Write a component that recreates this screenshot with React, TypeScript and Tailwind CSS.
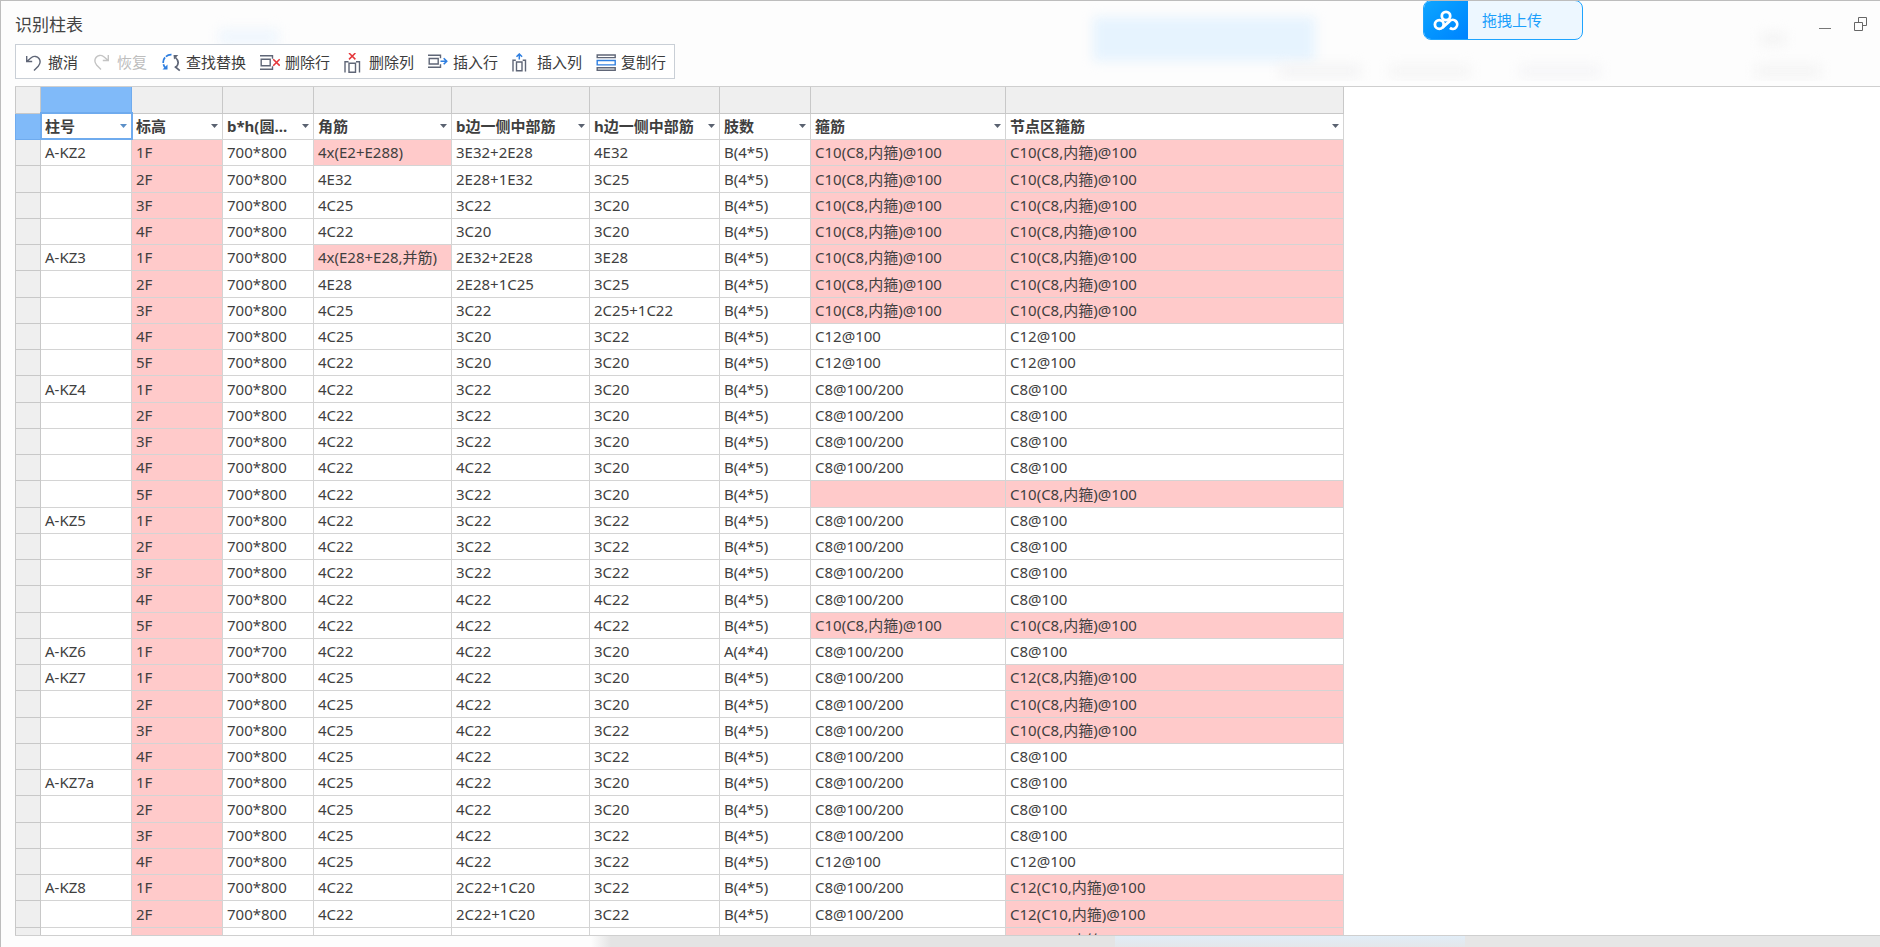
import { ReactNode } from "react";

const PINK = "bg-[#ffcaca]";
const stroke = "#5f6677";

// key, width, label
const COLS: [string, string, string][] = [
  ["no", "w-[91px]", "柱号"],
  ["level", "w-[91px]", "标高"],
  ["size", "w-[91px]", "b*h(圆..."],
  ["corner", "w-[138px]", "角筋"],
  ["b", "w-[138px]", "b边一侧中部筋"],
  ["h", "w-[130px]", "h边一侧中部筋"],
  ["legs", "w-[91px]", "肢数"],
  ["stirrup", "w-[195px]", "箍筋"],
  ["node", "w-[338px]", "节点区箍筋"],
];

const N8 = "C10(C8,内箍)@100";
const N12 = "C12(C8,内箍)@100";
const N1210 = "C12(C10,内箍)@100";
const S = "C8@100/200";

const ROWS: string[][] = [
  ["A-KZ2", "1F", "700*800", "4x(E2+E288)", "3E32+2E28", "4E32", "B(4*5)", N8, N8],
  ["", "2F", "700*800", "4E32", "2E28+1E32", "3C25", "B(4*5)", N8, N8],
  ["", "3F", "700*800", "4C25", "3C22", "3C20", "B(4*5)", N8, N8],
  ["", "4F", "700*800", "4C22", "3C20", "3C20", "B(4*5)", N8, N8],
  ["A-KZ3", "1F", "700*800", "4x(E28+E28,并筋)", "2E32+2E28", "3E28", "B(4*5)", N8, N8],
  ["", "2F", "700*800", "4E28", "2E28+1C25", "3C25", "B(4*5)", N8, N8],
  ["", "3F", "700*800", "4C25", "3C22", "2C25+1C22", "B(4*5)", N8, N8],
  ["", "4F", "700*800", "4C25", "3C20", "3C22", "B(4*5)", "C12@100", "C12@100"],
  ["", "5F", "700*800", "4C22", "3C20", "3C20", "B(4*5)", "C12@100", "C12@100"],
  ["A-KZ4", "1F", "700*800", "4C22", "3C22", "3C20", "B(4*5)", S, "C8@100"],
  ["", "2F", "700*800", "4C22", "3C22", "3C20", "B(4*5)", S, "C8@100"],
  ["", "3F", "700*800", "4C22", "3C22", "3C20", "B(4*5)", S, "C8@100"],
  ["", "4F", "700*800", "4C22", "4C22", "3C20", "B(4*5)", S, "C8@100"],
  ["", "5F", "700*800", "4C22", "3C22", "3C20", "B(4*5)", "", N8],
  ["A-KZ5", "1F", "700*800", "4C22", "3C22", "3C22", "B(4*5)", S, "C8@100"],
  ["", "2F", "700*800", "4C22", "3C22", "3C22", "B(4*5)", S, "C8@100"],
  ["", "3F", "700*800", "4C22", "3C22", "3C22", "B(4*5)", S, "C8@100"],
  ["", "4F", "700*800", "4C22", "4C22", "4C22", "B(4*5)", S, "C8@100"],
  ["", "5F", "700*800", "4C22", "4C22", "4C22", "B(4*5)", N8, N8],
  ["A-KZ6", "1F", "700*700", "4C22", "4C22", "3C20", "A(4*4)", S, "C8@100"],
  ["A-KZ7", "1F", "700*800", "4C25", "4C22", "3C20", "B(4*5)", S, N12],
  ["", "2F", "700*800", "4C25", "4C22", "3C20", "B(4*5)", S, N8],
  ["", "3F", "700*800", "4C25", "4C22", "3C22", "B(4*5)", S, N8],
  ["", "4F", "700*800", "4C25", "4C22", "3C22", "B(4*5)", S, "C8@100"],
  ["A-KZ7a", "1F", "700*800", "4C25", "4C22", "3C20", "B(4*5)", S, "C8@100"],
  ["", "2F", "700*800", "4C25", "4C22", "3C20", "B(4*5)", S, "C8@100"],
  ["", "3F", "700*800", "4C25", "4C22", "3C22", "B(4*5)", S, "C8@100"],
  ["", "4F", "700*800", "4C25", "4C22", "3C22", "B(4*5)", "C12@100", "C12@100"],
  ["A-KZ8", "1F", "700*800", "4C22", "2C22+1C20", "3C22", "B(4*5)", S, N1210],
  ["", "2F", "700*800", "4C22", "2C22+1C20", "3C22", "B(4*5)", S, N1210],
  ["", "3F", "700*800", "4C22", "2C22+1C20", "3C22", "B(4*5)", S, N1210],
];

function isInvalid(col: number, value: string) {
  if (col === 1) return true;
  if (col === 3) return value.includes("(");
  if (col >= 7) return value === "" || value.includes("(");
  return false;
}

function Icon({ children }: { children: ReactNode }) {
  return (
    <svg width="20" height="20" viewBox="0 0 20 20" fill="none" stroke={stroke} strokeWidth="1.4" aria-hidden="true">
      {children}
    </svg>
  );
}

const undoIcon = (
  <Icon>
    <path d="M3.700 3v5.500h5.500M4 8.200L8.500 4.500c2.500-1.800 5.800-1.300 7.500 1 1.900 2.600 1.300 5.200-.8 7.700L11 17.500" />
  </Icon>
);
const redoIcon = (
  <Icon>
    <path stroke="#c4c4c4" d="M16.300 2v5.500h-5.500M16 7.200L11.500 3.500C9 1.700 5.700 2.200 4 4.500c-1.900 2.600-1.300 5.200.8 7.700L9 16.500" />
  </Icon>
);
const replaceIcon = (
  <Icon>
    <path stroke="#2f7fe0" strokeWidth="1.700" strokeDasharray="6 1.200" d="M10.500 1.700C6 1.500 2.300 4.800 2.200 9c0 2.600.8 4.600 2.600 6.200" />
    <path fill="#2f7fe0" stroke="none" d="M1.500 16.500h5v-5z" />
    <path strokeWidth="1.700" d="M14.500 4.500c3 2.800 3.300 6.500.8 9.500M13.800 13.500l5 4.200" />
    <path fill={stroke} stroke="none" d="M12.500 2h4.800l-4.300 4.500z" />
  </Icon>
);
const deleteRowIcon = (
  <Icon>
    <path d="M0 2.700h12.500v3M0 16.300h12.500v-3M1.200 6.200h9v6.500h-9z" />
    <path stroke="#e5383b" strokeWidth="1.600" d="M13.200 6.200l6.500 6.500M19.700 6.200l-6.500 6.500" />
  </Icon>
);
const deleteColIcon = (
  <Icon>
    <path d="M1 19.500V8.700h3.500M15.500 19.500V8.700H12M5 10.200h6.500v9H5z" />
    <path stroke="#e5383b" strokeWidth="1.500" d="M5 0l6.400 6.400M11.400 0L5 6.400" />
  </Icon>
);
const insertRowIcon = (
  <Icon>
    <path d="M0 2.200h12.500v3M0 14.300h12.500v-3M1.200 5.500h9v5.500h-9z" />
    <path stroke="#2f7fe0" strokeWidth="1.600" d="M12.500 8.200h6M15.700 5.200l3 3-3 3" />
  </Icon>
);
const insertColIcon = (
  <Icon>
    <path d="M1 18.500V7.200h2.800M13.500 18.500V7.200h-2.800M4.500 9h5.500v8.700H4.500z" />
    <path stroke="#2f7fe0" strokeWidth="1.500" d="M7.300 6.500V1M4.500 3.800l2.800-2.800 2.800 2.800" />
  </Icon>
);
const copyRowIcon = (
  <Icon>
    <path d="M1.200 2h18v2.600h-18zM1.200 14.800h18v2.400h-18z" />
    <path stroke="#2f7fe0" d="M1.200 7.500h18v4.400h-18z" />
  </Icon>
);

const TOOLS: { label: string; icon: ReactNode; disabled?: boolean }[] = [
  { label: "撤消", icon: undoIcon },
  { label: "恢复", icon: redoIcon, disabled: true },
  { label: "查找替换", icon: replaceIcon },
  { label: "删除行", icon: deleteRowIcon },
  { label: "删除列", icon: deleteColIcon },
  { label: "插入行", icon: insertRowIcon },
  { label: "插入列", icon: insertColIcon },
  { label: "复制行", icon: copyRowIcon },
];

// soft tints of the window lying under the translucent title area
function Backdrop() {
  return (
    <div aria-hidden="true" className="pointer-events-none absolute inset-x-0 top-0 h-20 overflow-hidden">
      <div className="absolute top-4 right-[565px] h-11 w-[222px] bg-[#e6f3fe] blur-[6px]" />
      <div className="absolute top-7 left-[218px] h-4 w-[60px] bg-[#eff6fd] blur-[6px]" />
      <div className="absolute top-16 right-[520px] h-3 w-20 bg-[#f3f3f4] blur-[6px]" />
      <div className="absolute top-16 right-[410px] h-3 w-20 bg-[#f5f5f5] blur-[6px]" />
      <div className="absolute top-16 right-[280px] h-3 w-20 bg-[#f5f5f7] blur-[6px]" />
      <div className="absolute top-8 right-[95px] h-3 w-6 bg-[#f3f3f3] blur-[6px]" />
      <div className="absolute top-16 right-[60px] h-3 w-16 bg-[#f4f4f4] blur-[6px]" />
    </div>
  );
}

function UploadBadge() {
  return (
    <button className="absolute -top-px right-[297px] flex h-10 w-40 overflow-hidden rounded-lg border border-[#1ea4ff] bg-[#edf7ff] text-[15px] text-[#1c9ffb]">
      <span className="flex h-full w-11 items-center justify-center bg-linear-to-br from-[#10a5ff] to-[#0083ff]">
        <svg width="26" height="21" viewBox="0 0 26 21" fill="none" stroke="#fff" strokeWidth="2.800" aria-hidden="true">
          <circle cx="13" cy="6" r="4.200" />
          <circle cx="6.300" cy="14.500" r="4.400" />
          <path d="M9.400 17.600l7.200-6.500a4.500 4.500 0 1 1 .3 6.800" />
        </svg>
      </span>
      <span className="flex h-full items-center pl-3.5">拖拽上传</span>
    </button>
  );
}

function TitleBar() {
  return (
    <header className="relative flex h-[43px] items-center justify-between pt-0.5 pl-3.5 pr-3">
      <h1 className="pt-0.5 text-[17px] leading-6 text-[#444]">识别柱表</h1>
      <div className="flex gap-[22px]">
        <button aria-label="最小化">
          <svg width="14" height="14" viewBox="0 0 14 14" stroke="#777" aria-hidden="true">
            <path d="M1 11.500h12" />
          </svg>
        </button>
        <button aria-label="还原">
          <svg width="14" height="14" viewBox="0 0 14 14" fill="none" stroke="#666" aria-hidden="true">
            <path d="M.5 5.500h8v8h-8zM4.500 5.500v-5h8v8h-4" />
          </svg>
        </button>
      </div>
      <UploadBadge />
    </header>
  );
}

function Toolbar() {
  return (
    <div className="relative ml-3.5 flex h-[35px] w-fit items-center gap-3.5 border border-[#c9cfd6] bg-white pt-0.5 pl-[7px] pr-2">
      {TOOLS.map((t) => (
        <button key={t.label} disabled={t.disabled}
          className="flex items-center gap-[5px] text-[15px] whitespace-nowrap text-[#3c3c3c] disabled:text-[#bdbdbd]">
          {t.icon}
          {t.label}
        </button>
      ))}
    </div>
  );
}

function HeaderCell({ label, active }: { label: string; active: boolean }) {
  return (
    <th scope="col" className={`border border-[#d4d4d4] bg-white p-0 text-left font-bold ${active ? "outline-2 -outline-offset-1 outline-[#6fabee]" : ""}`}>
      <div className="flex items-center px-1">
        <span className="flex-1 whitespace-nowrap">{label}</span>
        <button aria-label={`筛选${label}`} className={active ? "text-[#5b8fc7]" : "text-[#5a6270]"}>
          <svg width="7" height="4" viewBox="0 0 7 4" fill="currentColor" aria-hidden="true">
            <path d="M0 0h7L3.500 4z" />
          </svg>
        </button>
      </div>
    </th>
  );
}

function ColumnTable() {
  return (
    <table className="w-[1328px] table-fixed border-collapse text-[15px] leading-5 text-[#3f3f3f]">
      <colgroup>
        <col className="w-[25px]" />
        {COLS.map(([key, width]) => <col key={key} className={width} />)}
      </colgroup>
      <thead>
        <tr className="h-[26px]">
          <td className="border border-t-0 border-[#c8c8c8] bg-[#efefef]" />
          {COLS.map(([key], i) => (
            <td key={key} className={`border border-t-0 ${i === 0 ? "border-[#6fabee] bg-[#80baf9]" : "border-[#c8c8c8] bg-[#efefef]"}`} />
          ))}
        </tr>
        <tr className="h-[26px]">
          <td className="border border-[#6fabee] bg-[#80baf9]" />
          {COLS.map(([key, , label], i) => <HeaderCell key={key} label={label} active={i === 0} />)}
        </tr>
      </thead>
      <tbody>
        {ROWS.map((row, r) => (
          <tr key={r} className="h-[26px] nth-[4n+2]:h-[27px]">
            <td className="border border-[#c8c8c8] bg-[#efefef]" />
            {row.map((value, c) => (
              <td key={c} className={`border border-[#d4d4d4] px-1 py-0 whitespace-nowrap ${isInvalid(c, value) ? PINK : "bg-white"}`}>
                {value}
              </td>
            ))}
          </tr>
        ))}
      </tbody>
    </table>
  );
}

export default function App() {
  return (
    <div className="relative flex h-screen flex-col overflow-hidden border-t border-l border-[#bdbdbd] bg-[#fdfdfd] font-['Noto_Sans','Noto_Sans_CJK_SC',sans-serif]">
      <Backdrop />
      <TitleBar />
      <Toolbar />
      <main className="relative mt-[7px] ml-3.5 min-h-0 flex-1 overflow-hidden border-t border-b border-[#cfcfcf] bg-white">
        <ColumnTable />
      </main>
      <footer className="flex h-[11px] shrink-0">
        <div className="w-[590px] bg-[#fdfdfd]" />
        <div className="w-5 bg-linear-to-r from-[#fdfdfd] to-[#e4e4e4]" />
        <div className="flex-1 bg-[#e4e4e4]" />
        <div className="w-[350px] bg-linear-to-b from-[#e1edf7] to-[#e4e7ea]" />
        <div className="w-[415px] bg-[#e6e6e6]" />
      </footer>
    </div>
  );
}
